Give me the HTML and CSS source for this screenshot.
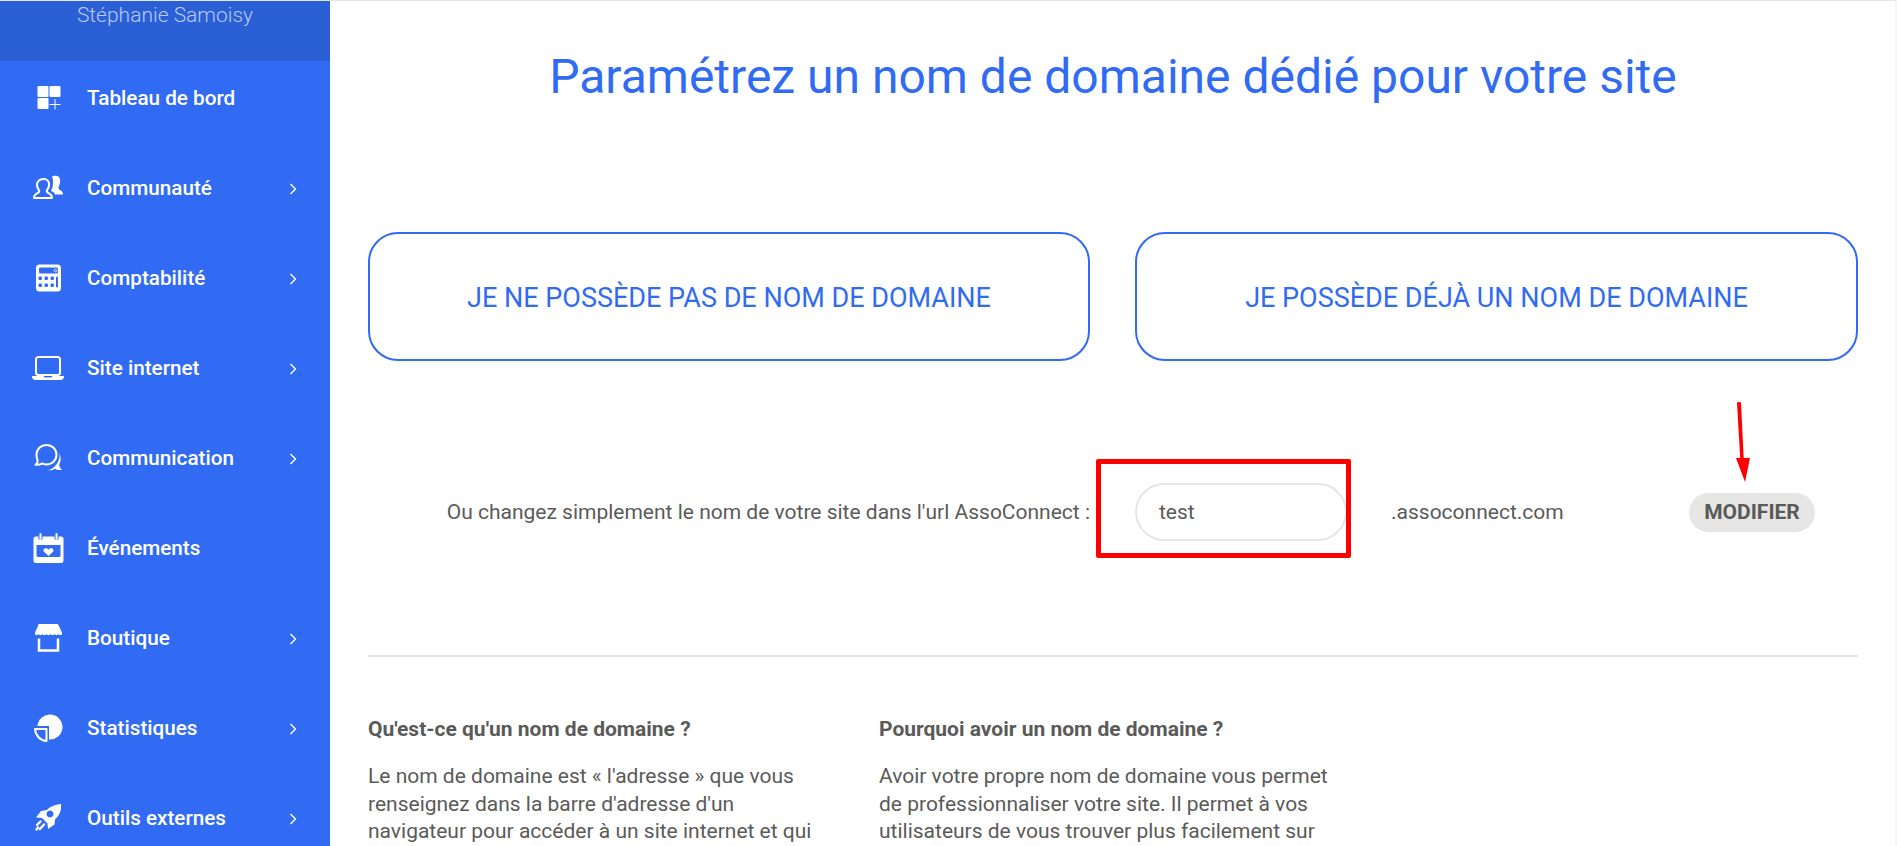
FILE: index.html
```html
<!DOCTYPE html>
<html lang="fr">
<head>
<meta charset="utf-8">
<title>Nom de domaine</title>
<link rel="stylesheet" href="styles.css">
</head>
<body>
<div class="page">
  <aside class="sidebar">
    <div class="user">Stéphanie Samoisy</div>
    <nav class="menu">
      <a class="item">
        <svg class="ico" viewBox="0 0 36 36"><rect x="7.500" y="5" width="11" height="11" rx="1"/><rect x="19.500" y="5" width="11" height="11" rx="1"/><rect x="7.500" y="17" width="11" height="11" rx="1"/><path class="line" d="M25 18v10.500M19.500 23.500h11"/></svg>
        <span class="label">Tableau de bord</span>
      </a>
      <a class="item">
        <svg class="ico" viewBox="0 0 36 36"><path d="M22 5.500C23 4.500 27 4 29 6c1.500 1.500 1.500 5 .5 7.500-.5 1.500-1 2.500-1 3.500 0 1.500 1.500 2 3 3 1 .8 1.500 2 1.500 3.500H25c-.5-1.800-2-2.800-4-3.500.5-2 2-3.500 1.800-6 .5-3 .2-6-.8-9z"/><path class="outline" d="M13.500 8c4 0 6 2.800 5.500 6.500-.3 2-1.100 3.600-2.100 4.600-.4 1.500 0 2.500 2 3.300 2 .8 3.100 1.600 3.100 4.600H4c0-3 1.100-3.800 3.100-4.600 2-.8 2.400-1.800 2-3.300-1-1-1.800-2.600-2.100-4.600C6.500 10.800 9.500 8 13.500 8z"/></svg>
        <span class="label">Communauté</span>
        <svg class="chev" viewBox="0 0 8 12"><path d="M1.500 1l5 5-5 5"/></svg>
      </a>
      <a class="item">
        <svg class="ico" viewBox="0 0 36 36"><path fill-rule="evenodd" d="M9.500 3.500h18A3.500 3.500 0 0 1 31 7v20a3.500 3.500 0 0 1-3.500 3.500h-18A3.500 3.500 0 0 1 6 27V7A3.500 3.500 0 0 1 9.500 3.500zM10.500 6.500a1.500 1.500 0 0 0-1.500 1.500v3a1.500 1.500 0 0 0 1.500 1.500h16a1.500 1.500 0 0 0 1.500-1.500V8a1.500 1.500 0 0 0-1.500-1.500z"/><circle cx="25.500" cy="9.500" r="1.300" class="ring"/><g class="cut"><rect x="8.500" y="15.500" width="3.500" height="3.500" rx="1.200"/><rect x="14.500" y="15.500" width="3.500" height="3.500" rx="1.200"/><rect x="20.500" y="15.500" width="3.500" height="3.500" rx="1.200"/><rect x="8.500" y="22.500" width="3.500" height="3.500" rx="1.200"/><rect x="14.500" y="22.500" width="3.500" height="3.500" rx="1.200"/><rect x="20.500" y="22.500" width="3.500" height="3.500" rx="1.200"/><rect x="26" y="15.500" width="2" height="11" rx="1"/></g></svg>
        <span class="label">Comptabilité</span>
        <svg class="chev" viewBox="0 0 8 12"><path d="M1.500 1l5 5-5 5"/></svg>
      </a>
      <a class="item">
        <svg class="ico" viewBox="0 0 36 36"><rect class="outline" x="6" y="6" width="24" height="18" rx="2.500"/><path d="M2 25h11.500l1.200 1.500h6.600L22.500 25H34c0 2.500-1.200 4-3.500 4h-25C3.200 29 2 27.500 2 25z"/></svg>
        <span class="label">Site internet</span>
        <svg class="chev" viewBox="0 0 8 12"><path d="M1.500 1l5 5-5 5"/></svg>
      </a>
      <a class="item">
        <svg class="ico" viewBox="0 0 36 36"><path class="outline" d="M16.500 4c5.600 0 10 4.300 10 9.700s-4.400 9.800-10 9.800c-1.500 0-3-.4-4.300-1-1.700.9-4 1.500-6.700 1.200 1.300-1 2.200-2.400 2.200-4C6.900 18 6.500 15.800 6.500 13.700 6.500 8.300 10.900 4 16.500 4z"/><path d="M29.700 12.500c1.300 4 1.300 7.500-.3 10.500-.4 1.700.2 3.700 2.600 6-3.500.4-5.700-.3-7.300-1.300-1.900 1.200-4 1.700-6.700 1.500 6-1.500 12-7.500 11.700-16.700z"/></svg>
        <span class="label">Communication</span>
        <svg class="chev" viewBox="0 0 8 12"><path d="M1.500 1l5 5-5 5"/></svg>
      </a>
      <a class="item">
        <svg class="ico" viewBox="0 0 36 36"><path fill-rule="evenodd" d="M6 5.500h2.500v3h4v-3h12v3h4v-3H31a2.500 2.500 0 0 1 2.500 2.500v21.500A2.500 2.500 0 0 1 31 32H6a2.500 2.500 0 0 1-2.500-2.500V8A2.500 2.500 0 0 1 6 5.500zM6.500 14v10.500A1.500 1.500 0 0 0 8 26h21a1.500 1.500 0 0 0 1.500-1.500V14zM18.500 25l-4.500-4.300c-2-2.300 2-5.200 4.500-2 2.500-3.200 6.500-.3 4.500 2z"/><rect x="9.500" y="2" width="2" height="6.500" rx="1"/><rect x="25.500" y="2" width="2" height="6.500" rx="1"/></svg>
        <span class="label">Événements</span>
      </a>
      <a class="item">
        <svg class="ico" viewBox="0 0 36 36"><path d="M9.500 3h17c1 0 1.700.5 2.200 1.400l3.300 7.100v1.500c-.4 1.500-3 1.500-3.500 0-.5 1.500-3.500 1.500-4 0-.5 1.500-3.500 1.500-4 0-.5 1.500-3.500 1.500-4 0-.5 1.500-3.500 1.500-4 0-.5 1.500-3.500 1.500-4 0-.5 1.500-3 1.500-3.500 0v-1.500l3.300-7.100C7.800 3.500 8.500 3 9.500 3z"/><path class="box" d="M9 17.500V29.500H28V17.500"/></svg>
        <span class="label">Boutique</span>
        <svg class="chev" viewBox="0 0 8 12"><path d="M1.500 1l5 5-5 5"/></svg>
      </a>
      <a class="item">
        <svg class="ico" viewBox="0 0 36 36"><path d="M7.500 15A12.500 12.500 0 1 1 19 28.500V15z"/><path class="box thin" d="M5 18H16.500V30C10 29.500 5.500 24.500 5 18z"/></svg>
        <span class="label">Statistiques</span>
        <svg class="chev" viewBox="0 0 8 12"><path d="M1.500 1l5 5-5 5"/></svg>
      </a>
      <a class="item">
        <svg class="ico" viewBox="0 0 36 36"><path fill-rule="evenodd" d="M31 3c.5 6-1 11-6 15.500l-.5 5-6.500 4.500-.5-5.500-5.500-5.500-6-.5 5-6.500 6-1C19.500 5.500 25.500 3.500 31 3zM20 9.500a3.500 3.500 0 1 0 .01 0z"/><path class="strokes" d="M10.500 20.500l-3.500 3.500M14 23.500l-4 4.500M8 26.500l-1.500 2"/></svg>
        <span class="label">Outils externes</span>
        <svg class="chev" viewBox="0 0 8 12"><path d="M1.500 1l5 5-5 5"/></svg>
      </a>
    </nav>
  </aside>
  <main class="content">
    <h1 class="title">Paramétrez un nom de domaine dédié pour votre site</h1>
    <div class="choices">
      <button class="choice">JE NE POSSÈDE PAS DE NOM DE DOMAINE</button>
      <button class="choice">JE POSSÈDE DÉJÀ UN NOM DE DOMAINE</button>
    </div>
    <div class="url-row">
      <span class="url-label">Ou changez simplement le nom de votre site dans l'url AssoConnect :</span>
      <span class="url-input">test</span>
      <span class="url-suffix">.assoconnect.com</span>
      <button class="modify">MODIFIER</button>
      <span class="red-box"></span>
      <svg class="red-arrow" viewBox="0 0 20 84"><path d="M2 2c.5-1.300 3.500-1.300 4 0L8.700 57H15L10 81 1 57h4.200z"/></svg>
    </div>
    <hr class="rule">
    <div class="faq">
      <section class="faq-col">
        <h2>Qu'est-ce qu'un nom de domaine ?</h2>
        <p>Le nom de domaine est « l'adresse » que vous renseignez dans la barre d'adresse d'un navigateur pour accéder à un site internet et qui</p>
      </section>
      <section class="faq-col">
        <h2>Pourquoi avoir un nom de domaine ?</h2>
        <p>Avoir votre propre nom de domaine vous permet de professionnaliser votre site. Il permet à vos utilisateurs de vous trouver plus facilement sur</p>
      </section>
    </div>
  </main>
</div>
</body>
</html>
```

FILE: styles.css
```css
* { box-sizing: border-box; }
html, body { margin: 0; height: 100%; overflow: hidden; background: #fff; }
body { font-family: Roboto, "Liberation Sans", sans-serif; color: #5a5a59; }
.page { display: flex; height: 846px; border-top: 1px solid #e6e6e6; border-right: 2px solid #f5f5f5; }

.sidebar { width: 330px; flex: none; background: #316bf3; color: #fff; overflow: hidden; }
.user { height: 60px; background: #2b5fd6; color: #b7c9f6; font-size: 21px; font-weight: 300; text-align: center; padding-top: 1px; line-height: 26px; }
.menu { display: flex; flex-direction: column; gap: 45px; padding-top: 15px; }
.item { position: relative; display: flex; align-items: center; height: 45px; padding-left: 30px; }
.ico { width: 36px; height: 36px; flex: none; fill: #fff; }
.ico .line { stroke: #fff; stroke-width: 1; fill: none; }
.ico .outline { fill: none; stroke: #fff; stroke-width: 2; stroke-linejoin: round; }
.ico .box { fill: none; stroke: #fff; stroke-width: 2.5; }
.ico .box.thin { stroke-width: 2; stroke-linejoin: round; }
.ico .cut { fill: #316bf3; }
.ico .ring { fill: none; stroke: #fff; stroke-width: .8; }
.ico .strokes { fill: none; stroke: #fff; stroke-width: 2.4; stroke-linecap: round; }
.label { margin: 0 0 2px 21px; font-size: 20.7px; font-weight: 500; line-height: 22px; flex: 1; }
.chev { width: 8px; height: 12px; margin-right: 33px; fill: none; stroke: #fff; stroke-width: 1.4; flex: none; }

.content { flex: 1; min-width: 0; padding: 0 37px 0 38px; }
.title { margin: 45px 0 0; height: 61px; color: #316bf3; font-size: 48px; font-weight: 400; line-height: 61px; text-align: center; }
.choices { display: grid; grid-template-columns: 722px 723px; column-gap: 45px; margin-top: 125px; }
.choice { height: 129px; background: #fff; border: 2px solid #316bf3; border-radius: 30px; color: #316bf3; font: 400 27px Roboto, sans-serif; padding: 2px 0 0; }

.url-row { position: relative; display: flex; align-items: center; margin-top: 122px; height: 58px; font-size: 21px; }
.url-label { width: 722px; flex: none; text-align: right; }
.url-input { width: 212px; height: 58px; margin-left: 45px; flex: none; border: 2px solid #e6e6e5; border-radius: 29px; padding-left: 22px; line-height: 54px; }
.url-suffix { margin-left: 44px; flex: 1; }
.modify { width: 126px; height: 39px; margin-right: 43px; flex: none; background: #e6e6e5; border: 0; border-radius: 20px; color: #5a5a59; font: 700 21px Roboto, sans-serif; padding: 0; }
.red-box { position: absolute; left: 728px; top: -24px; width: 255px; height: 99px; border: 5px solid #f00; border-radius: 2px; }
.red-arrow { position: absolute; left: 1367px; top: -82px; width: 20px; height: 84px; fill: #f00; }

.rule { border: 0; border-top: 2px solid #e6e6e5; margin: 114px 0 0; }
.faq { display: grid; grid-template-columns: 464px 464px; column-gap: 47px; margin-top: 59px; font-size: 21px; line-height: 27.5px; }
.faq-col h2 { margin: 0 0 20px; font-size: 21px; font-weight: 700; line-height: 27px; }
.faq-col p { margin: 0; }
```
